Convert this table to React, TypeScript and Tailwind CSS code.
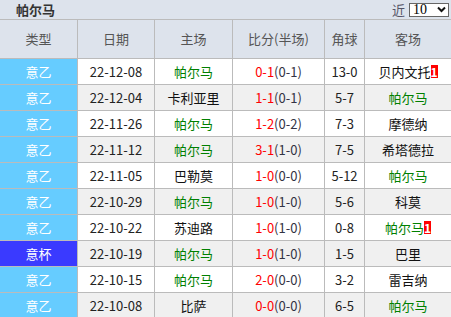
import React from 'react';

type Row = {
  type: string;
  date: string;
  home: string;
  score: string;
  half: string;
  corner: string;
  away: string;
  badge?: 'home' | 'away';
};

const rows: Row[] = [
  { type: '意乙', date: '22-12-08', home: '帕尔马', score: '0-1', half: '(0-1)', corner: '13-0', away: '贝内文托', badge: 'away' },
  { type: '意乙', date: '22-12-04', home: '卡利亚里', score: '1-1', half: '(0-1)', corner: '5-7', away: '帕尔马' },
  { type: '意乙', date: '22-11-26', home: '帕尔马', score: '1-2', half: '(0-2)', corner: '7-3', away: '摩德纳' },
  { type: '意乙', date: '22-11-12', home: '帕尔马', score: '3-1', half: '(1-0)', corner: '7-5', away: '希塔德拉' },
  { type: '意乙', date: '22-11-05', home: '巴勒莫', score: '1-0', half: '(0-0)', corner: '5-12', away: '帕尔马' },
  { type: '意乙', date: '22-10-29', home: '帕尔马', score: '1-0', half: '(1-0)', corner: '5-6', away: '科莫' },
  { type: '意乙', date: '22-10-22', home: '苏迪路', score: '1-0', half: '(1-0)', corner: '0-8', away: '帕尔马', badge: 'away' },
  { type: '意杯', date: '22-10-19', home: '帕尔马', score: '1-0', half: '(1-0)', corner: '1-5', away: '巴里' },
  { type: '意乙', date: '22-10-15', home: '帕尔马', score: '2-0', half: '(0-0)', corner: '3-2', away: '雷吉纳' },
  { type: '意乙', date: '22-10-08', home: '比萨', score: '0-0', half: '(0-0)', corner: '6-5', away: '帕尔马' },
];

const TEAM = '帕尔马';

const Team = ({ name, badge }: { name: string; badge?: boolean }) => (
  <span className={`flex items-center ${name === TEAM ? 'text-[#008000]' : 'text-[#111]'}`}>
    {name}
    {badge && (
      <span className="inline-block h-[13px] w-[7px] bg-[#ff0000] text-center text-[12px] font-bold leading-[13px] text-white">
        1
      </span>
    )}
  </span>
);

export default function App() {
  return (
    <div
      className="h-[317px] w-[451px] overflow-hidden bg-white text-[13px] text-[#333]"
      style={{ fontFamily: '"Noto Sans CJK SC", "Noto Sans", sans-serif' }}
    >
      {/* title bar */}
      <div className="flex h-[20px] items-center justify-between border-b border-[#bbb] bg-[#dde3ec] pl-[16px] pr-[2px]">
        <span className="text-[13px] font-bold leading-none text-[#333]">帕尔马</span>
        <div className="flex items-center gap-[4px]">
          <span className="text-[13px] text-[#556]">近</span>
          <div className="flex h-[14px] w-[40px] items-center justify-between border border-[#666] bg-white pl-[3px] pr-[2px]">
            <span className="text-[14px] leading-none text-black" style={{ fontFamily: '"Liberation Serif", serif' }}>10</span>
            <svg width="9" height="7" viewBox="0 0 9 7">
              <path d="M1 1.5 L4.5 5 L8 1.5" fill="none" stroke="#111" strokeWidth="2" />
            </svg>
          </div>
        </div>
      </div>

      {/* table */}
      <div className="grid grid-cols-[77px_76px_77px_91px_39px_1fr] gap-px bg-[#bbb]">
        {['类型', '日期', '主场', '比分(半场)', '角球', '客场'].map((h) => (
          <div key={h} className="flex h-[38px] items-center justify-center bg-[#dde3ec] text-[#555]">
            {h}
          </div>
        ))}
        {rows.map((r, i) => {
          const bg = i % 2 === 0 ? 'bg-white' : 'bg-[#f0f0f0]';
          return (
            <React.Fragment key={r.date}>
              <div
                className={`flex h-[25px] items-center justify-center text-white ${
                  r.type === '意杯' ? 'bg-[#3a3aff]' : 'bg-[#66ccff]'
                }`}
              >
                {r.type}
              </div>
              <div className={`flex h-[25px] items-center justify-center text-[#222] ${bg}`}>{r.date}</div>
              <div className={`flex h-[25px] items-center justify-center ${bg}`}>
                <Team name={r.home} />
              </div>
              <div className={`flex h-[25px] items-center justify-center ${bg}`}>
                <span className="text-[#ff0000]">{r.score}</span>
                <span className="text-[#334]">{r.half}</span>
              </div>
              <div className={`flex h-[25px] items-center justify-center text-[#222] ${bg}`}>{r.corner}</div>
              <div className={`flex h-[25px] items-center justify-center ${bg}`}>
                <Team name={r.away} badge={r.badge === 'away'} />
              </div>
            </React.Fragment>
          );
        })}
      </div>
    </div>
  );
}
